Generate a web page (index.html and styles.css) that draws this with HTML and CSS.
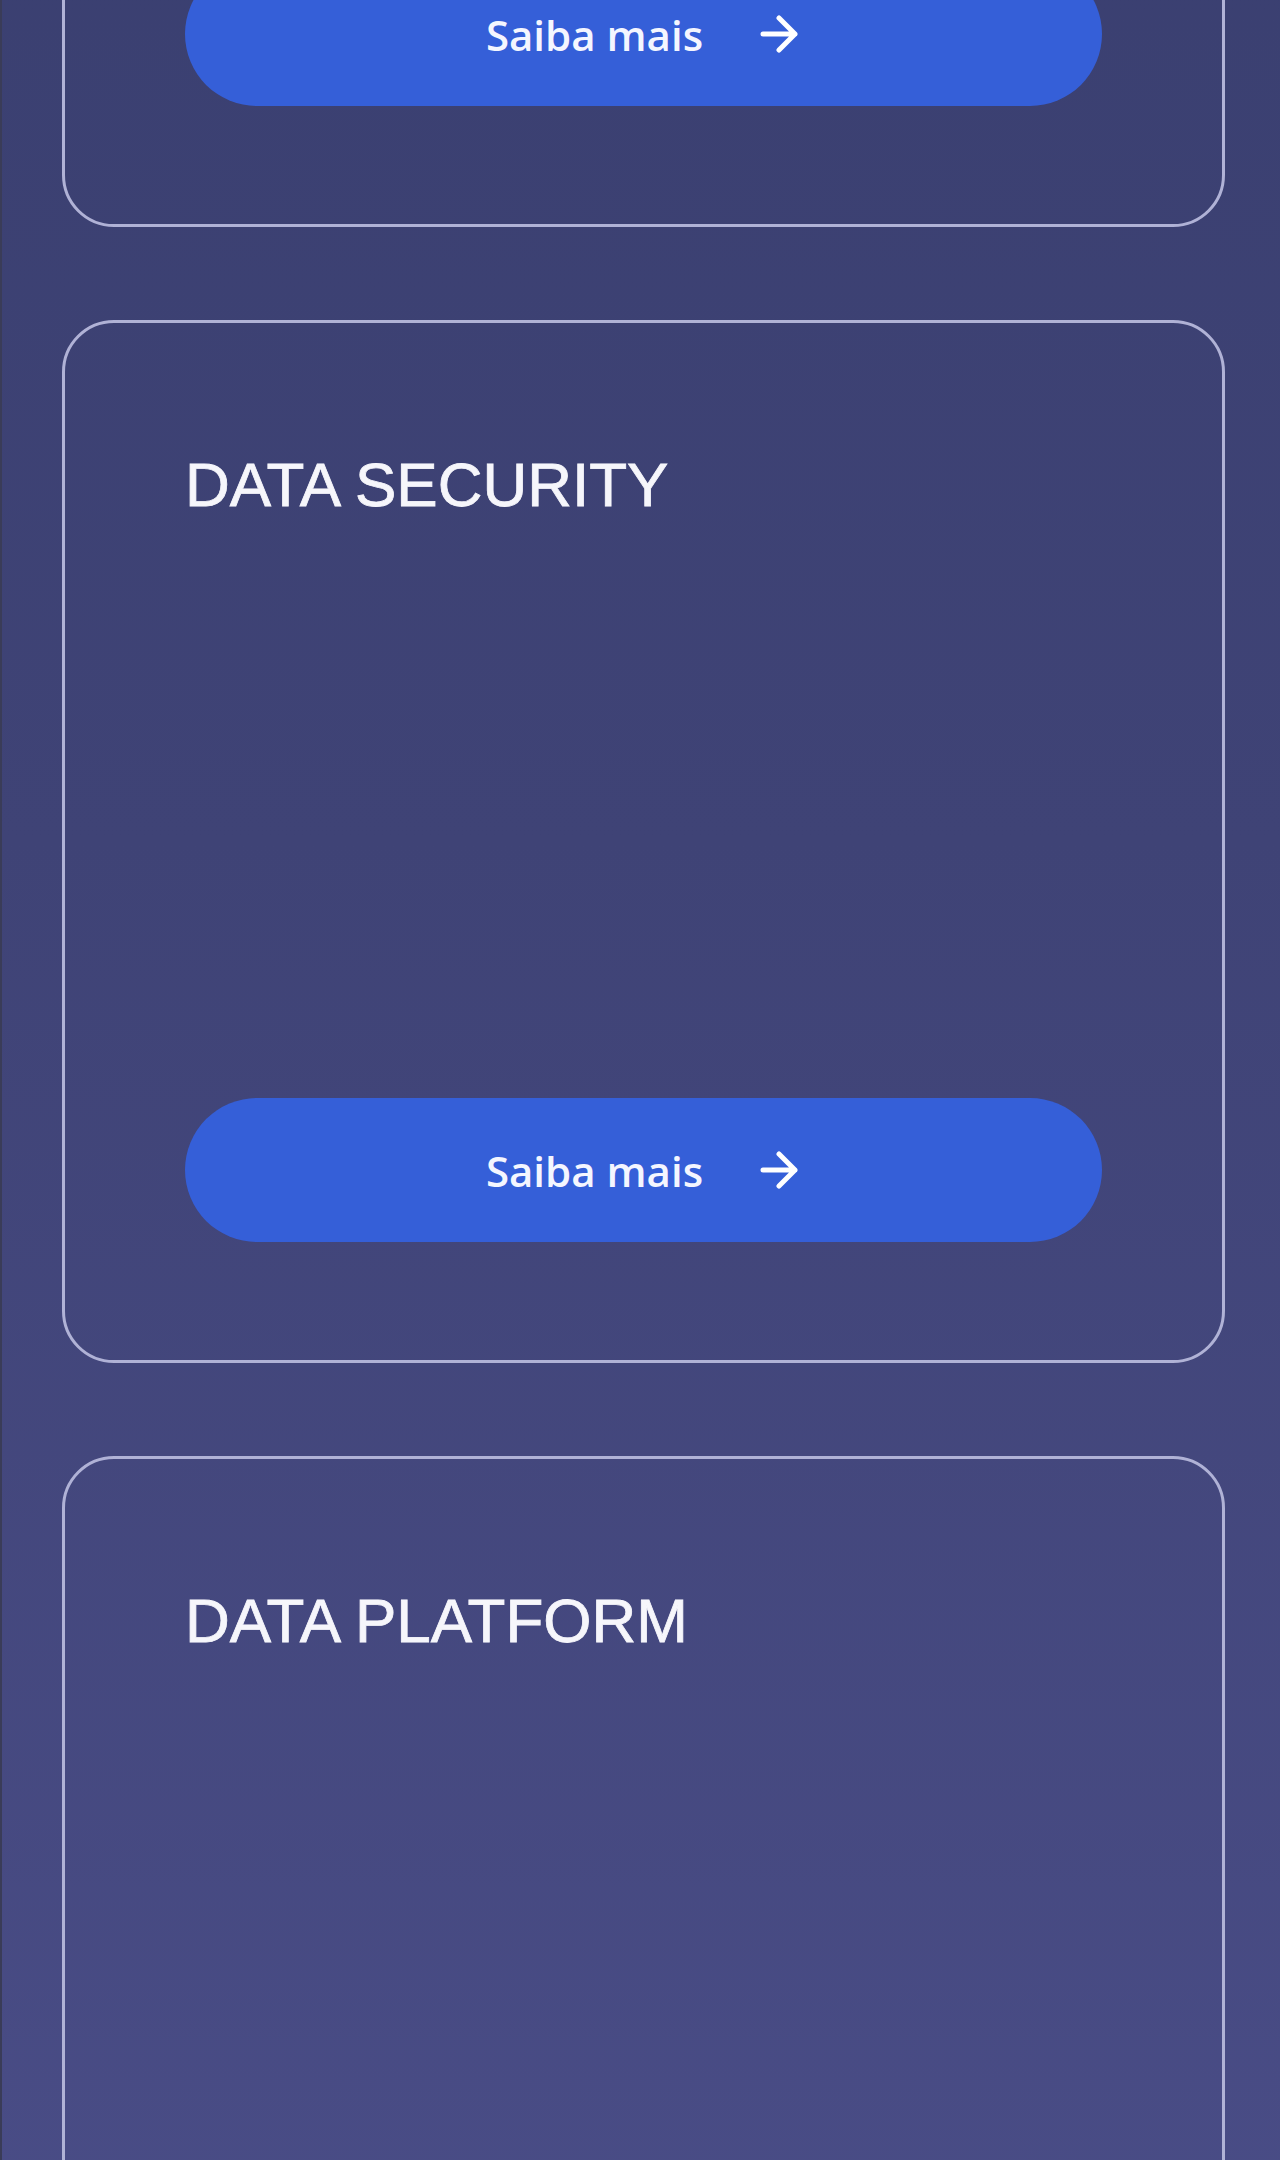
FILE: index.html
```html
<!DOCTYPE html>
<html lang="pt-BR">
<head>
    <meta charset="UTF-8">
    <meta name="viewport" content="width=device-width, initial-scale=1.0">
    <title>Soluções</title>
    <link rel="stylesheet" href="styles.css">
</head>
<body>
    <div class="page">
        <div class="solutions">
            <div class="solution-card">
                <h2 class="solution-title">DATA GOVERNANCE</h2>
                <a class="more-btn" href="#">
                    <span>Saiba mais</span>
                    <svg class="arrow" viewBox="0 0 42 40" width="42" height="40" aria-hidden="true">
                        <path d="M4 20h32M20 4l16 16-16 16" fill="none" stroke="#fff" stroke-width="5" stroke-linecap="round" stroke-linejoin="round"/>
                    </svg>
                </a>
            </div>

            <div class="solution-card">
                <h2 class="solution-title">DATA SECURITY</h2>
                <a class="more-btn" href="#">
                    <span>Saiba mais</span>
                    <svg class="arrow" viewBox="0 0 42 40" width="42" height="40" aria-hidden="true">
                        <path d="M4 20h32M20 4l16 16-16 16" fill="none" stroke="#fff" stroke-width="5" stroke-linecap="round" stroke-linejoin="round"/>
                    </svg>
                </a>
            </div>

            <div class="solution-card">
                <h2 class="solution-title">DATA PLATFORM</h2>
                <a class="more-btn" href="#">
                    <span>Saiba mais</span>
                    <svg class="arrow" viewBox="0 0 42 40" width="42" height="40" aria-hidden="true">
                        <path d="M4 20h32M20 4l16 16-16 16" fill="none" stroke="#fff" stroke-width="5" stroke-linecap="round" stroke-linejoin="round"/>
                    </svg>
                </a>
            </div>
        </div>
    </div>
</body>
</html>
```

FILE: styles.css
```css
html, body {
    margin: 0;
    padding: 0;
}

body {
    background: #383e6e;
    font-family: 'Liberation Sans', Arial, sans-serif;
    color: #fff;
    overflow: hidden;
}

.page {
    min-height: 2160px;
    border-left: 2px solid #3a3c58;
    background: linear-gradient(180deg, #373d6d 0%, #3f4376 50%, #4b4e89 100%);
    box-sizing: border-box;
}

/* page is scrolled: first card only shows its bottom */
.solutions {
    display: flex;
    flex-direction: column;
    gap: 93px;
    margin: -816px 55px 0 60px;
}

.solution-card {
    height: 1043px;
    box-sizing: border-box;
    border: 3px solid #b0b2d6;
    border-radius: 52px;
    padding: 125px 120px 118px;
    display: flex;
    flex-direction: column;
    justify-content: space-between;
}

.solution-title {
    margin: 0;
    font-size: 62px;
    font-weight: 400;
    line-height: 1.2;
    color: #f6f6fb;
    -webkit-text-stroke: 0.8px #f6f6fb;
}

.more-btn {
    display: flex;
    align-items: center;
    justify-content: center;
    gap: 56px;
    height: 144px;
    border-radius: 72px;
    background: #355fd8;
    color: #f4f6ff;
    text-decoration: none;
    font-family: 'Open Sans', sans-serif;
    font-size: 42px;
    font-weight: 600;
}

.more-btn .arrow {
    display: block;
}
```
